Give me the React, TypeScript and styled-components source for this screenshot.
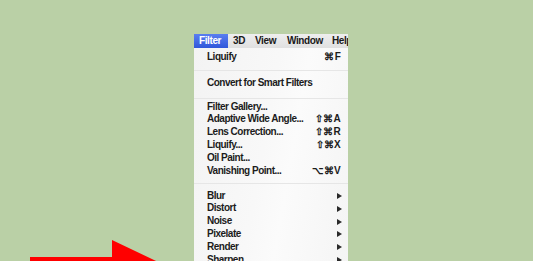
import React from 'react';
import styled, { createGlobalStyle } from 'styled-components';

// Filter menu from Photoshop on a green backdrop, with a red pointer arrow

const GlobalStyle = createGlobalStyle`
  html, body {
    margin: 0;
    padding: 0;
    background: #bad0a6;
  }
`;

const Stage = styled.div`
  position: relative;
  width: 533px;
  height: 261px;
  overflow: hidden;
  background: #bad0a6;
  padding: 34px 0 0 194px;
  box-sizing: border-box;
  font-family: 'Liberation Sans', Arial, sans-serif;
  font-weight: 700;
  font-size: 10px;
  letter-spacing: -0.5px;
  color: #1c1c1c;
`;

const Menu = styled.div`
  width: 154px;
  display: flex;
  flex-direction: column;
  background: linear-gradient(100deg, #f3f3f3 0%, #f8f8f8 45%, #fbfbfb 60%, #f4f4f4 100%);
`;

const MenuBar = styled.div`
  height: 14px;
  display: flex;
  align-items: center;
  overflow: hidden;
  white-space: nowrap;
  background: linear-gradient(#eeeeee, #e0e0e0);
`;

const BarItem = styled.div<{ $active?: boolean; $w: number }>`
  flex: none;
  width: ${(p) => p.$w}px;
  height: 14px;
  line-height: 14px;
  padding-left: 5px;
  box-sizing: border-box;
  letter-spacing: -0.4px;
  color: ${(p) => (p.$active ? '#ffffff' : '#1a1a1a')};
  background: ${(p) => (p.$active ? 'linear-gradient(#5a7ef0, #3057da)' : 'transparent')};
`;

const Section = styled.div<{ $pt: number; $pb: number }>`
  padding: ${(p) => p.$pt}px 6px ${(p) => p.$pb}px 13px;
  border-bottom: 1px solid #e6e6e6;
`;

const Row = styled.div`
  height: 12.8px;
  line-height: 12.8px;
  display: flex;
  justify-content: space-between;
  align-items: center;
  white-space: nowrap;
`;

const Shortcut = styled.span`
  padding-right: 1px;
  font-size: 10px;
  letter-spacing: 0.2px;
`;

const SubArrow = styled.span`
  width: 0;
  height: 0;
  border-top: 3px solid transparent;
  border-bottom: 3px solid transparent;
  border-left: 5px solid #2a2a2a;
`;

const Pointer = styled.svg`
  position: absolute;
  left: 0;
  top: 230px;
`;

type Item = { label: string; key?: string; sub?: boolean };

const groups: { pt: number; pb: number; items: Item[] }[] = [
  { pt: 2.6, pb: 6.6, items: [{ label: 'Liquify', key: '⌘F' }] },
  { pt: 5.6, pb: 8.6, items: [{ label: 'Convert for Smart Filters' }] },
  {
    pt: 1.6,
    pb: 5.6,
    items: [
      { label: 'Filter Gallery...' },
      { label: 'Adaptive Wide Angle...', key: '⇧⌘A' },
      { label: 'Lens Correction...', key: '⇧⌘R' },
      { label: 'Liquify...', key: '⇧⌘X' },
      { label: 'Oil Paint...' },
      { label: 'Vanishing Point...', key: '⌥⌘V' },
    ],
  },
  {
    pt: 5.6,
    pb: 6,
    items: ['Blur', 'Distort', 'Noise', 'Pixelate', 'Render', 'Sharpen', 'Stylize'].map((l) => ({
      label: l,
      sub: true,
    })),
  },
];

function App() {
  return (
    <>
      <GlobalStyle />
      <Stage>
        <Menu>
          <MenuBar>
            <BarItem $active $w={34}>Filter</BarItem>
            <BarItem $w={22}>3D</BarItem>
            <BarItem $w={32}>View</BarItem>
            <BarItem $w={45}>Window</BarItem>
            <BarItem $w={30}>Help</BarItem>
          </MenuBar>
          {groups.map((g, i) => (
            <Section key={i} $pt={g.pt} $pb={g.pb}>
              {g.items.map((it) => (
                <Row key={it.label}>
                  <span>{it.label}</span>
                  {it.key && <Shortcut>{it.key}</Shortcut>}
                  {it.sub && <SubArrow />}
                </Row>
              ))}
            </Section>
          ))}
        </Menu>
        <Pointer width="200" height="31" viewBox="0 0 200 31">
          <polygon points="30,27 112,27 112,10 175,40 30,40" fill="#ff0000" />
        </Pointer>
      </Stage>
    </>
  );
}

export default App;
